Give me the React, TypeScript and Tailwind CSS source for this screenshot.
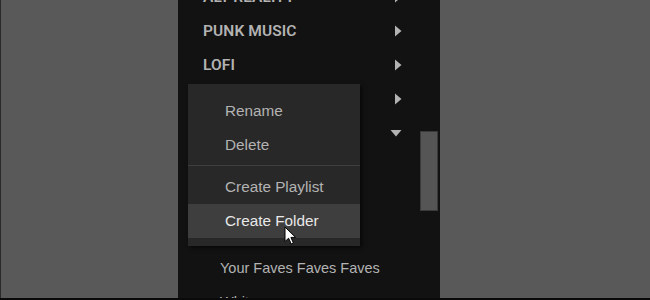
import React from 'react';

const font = { fontFamily: '"Liberation Sans", Arial, sans-serif' };

function RightArrow() {
    return (
        <svg width="8" height="12" viewBox="0 0 8 12" className="text-[#b3b3b3]">
            <path d="M1 0.5 L7.5 6 L1 11.5 Z" fill="currentColor" />
        </svg>
    );
}

function DownArrow() {
    return (
        <svg width="12" height="8" viewBox="0 0 12 8" className="text-[#b3b3b3]">
            <path d="M0.5 1 L11.5 1 L6 7.5 Z" fill="currentColor" />
        </svg>
    );
}

function FolderRow({ label, open }: { label: string; open?: boolean }) {
    return (
        <div className="flex h-[34px] items-center justify-between pl-[25px] pr-[38px]">
            <span className="pt-[2px] text-[15.5px] font-semibold tracking-[0.1px] text-[#b3b3b3]" style={{ fontFamily: 'Roboto, "Liberation Sans", sans-serif' }}>{label}</span>
            {open ? <DownArrow /> : <RightArrow />}
        </div>
    );
}

function PlaylistRow({ label }: { label: string }) {
    return (
        <div className="flex h-[34px] items-center pl-[42px] text-[14.5px] text-[#b3b3b3]">{label}</div>
    );
}

function MenuItem({ label, active }: { label: string; active?: boolean }) {
    return (
        <div
            className={
                active
                    ? 'flex h-[34px] items-center bg-[#3e3e3e] pl-[37px] text-[15.3px] text-[#e8e8e8]'
                    : 'flex h-[34px] items-center pl-[37px] text-[15.3px] text-[#b3b3b3]'
            }
        >
            {label}
        </div>
    );
}

function Cursor() {
    return (
        <svg width="14" height="20" viewBox="0 0 14 20" className="absolute left-[284px] top-[226px]">
            <path
                d="M1 1 L1 15.5 L4.6 12.2 L7.2 18 L9.4 17 L6.9 11.4 L11.6 11.4 Z"
                fill="#ffffff"
                stroke="#000000"
                strokeWidth="1"
                strokeLinejoin="round"
            />
        </svg>
    );
}

export default function App() {
    return (
        <div className="relative flex h-[300px] w-[650px] overflow-hidden bg-[#595959]" style={font}>
            <div className="w-[178px] shrink-0 border-l border-[#2a2a2a]" />
            <div className="relative w-[262px] shrink-0 overflow-hidden bg-[#121212]">
                <div className="-mt-[20px] flex flex-col">
                    <FolderRow label="ALT REALITY" />
                    <FolderRow label="PUNK MUSIC" />
                    <FolderRow label="LOFI" />
                    <FolderRow label="CHILL" />
                    <FolderRow label="FAVES" open />
                    <PlaylistRow label="Faves" />
                    <PlaylistRow label="Faves Faves" />
                    <PlaylistRow label="More Faves" />
                    <PlaylistRow label="Your Faves Faves Faves" />
                    <PlaylistRow label="Whitney" />
                </div>

                <div className="absolute right-[2px] top-[131px] h-[80px] w-[18px] border border-[#3a3a3a] bg-[#555555]" />
            </div>
            <div className="flex-1" />

            <div className="absolute left-[188px] top-[84px] w-[172px] bg-[#282828] pt-[10px] pb-[8px] shadow-[2px_2px_4px_rgba(0,0,0,0.6)]">
                <MenuItem label="Rename" />
                <MenuItem label="Delete" />
                <div className="mt-[3px] mb-[4px] h-px bg-[#3e3e3e]" />
                <MenuItem label="Create Playlist" />
                <MenuItem label="Create Folder" active />
            </div>

            <Cursor />

            <div className="absolute bottom-0 left-0 h-[2px] w-full bg-[#0a0a0a]" />
        </div>
    );
}
